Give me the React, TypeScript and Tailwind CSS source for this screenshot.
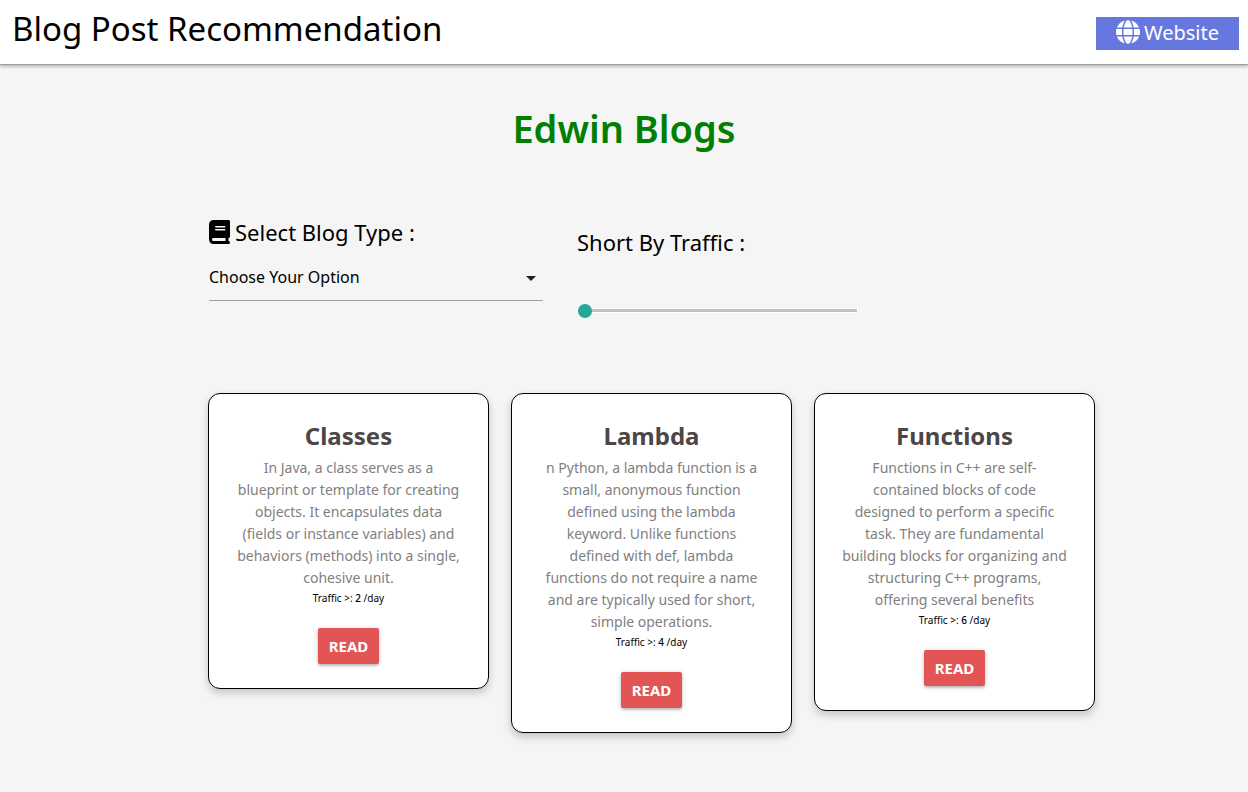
import { useState } from "react";
import { FaBook, FaGlobe } from "react-icons/fa6";

type Blog = { title: string; text: string; traffic: number };

const blogs: Blog[] = [
  {
    title: "Classes",
    text: "In Java, a class serves as a\nblueprint or template for creating\nobjects. It encapsulates data\n(fields or instance variables) and\nbehaviors (methods) into a single,\ncohesive unit.",
    traffic: 2,
  },
  {
    title: "Lambda",
    text: "n Python, a lambda function is a\nsmall, anonymous function\ndefined using the lambda\nkeyword. Unlike functions\ndefined with def, lambda\nfunctions do not require a name\nand are typically used for short,\nsimple operations.",
    traffic: 4,
  },
  {
    title: "Functions",
    text: "Functions in C++ are self-\ncontained blocks of code\ndesigned to perform a specific\ntask. They are fundamental\nbuilding blocks for organizing and\nstructuring C++ programs,\noffering several benefits",
    traffic: 6,
  },
];

function Header() {
  return (
    <header className="flex items-center justify-between border-b border-[#9e9e9e] bg-white pr-[9px] pl-3 shadow-[0_2px_2px_0_rgba(0,0,0,0.14),0_1px_5px_0_rgba(0,0,0,0.12)]">
      <a href="#home" className="pt-[5px] pb-[11px] text-[33px] leading-[48px] whitespace-nowrap">
        Blog Post Recommendation
      </a>
      <a
        href="#website"
        className="mt-[2px] flex h-[33px] items-center gap-1 bg-[#6777e0] px-5 text-xl leading-none whitespace-nowrap text-white"
      >
        <FaGlobe className="mb-[3px] size-6" aria-hidden="true" />
        Website
      </a>
    </header>
  );
}

function BlogCard({ title, text, traffic }: Blog) {
  return (
    <article className="flex flex-col items-center rounded-xl border border-black bg-white px-5 py-6 text-center shadow-[0_4px_8px_0_rgba(0,0,0,0.2)]">
      <h2 className="text-2xl leading-9 font-bold text-[#4d4646]">{title}</h2>
      <p className="pt-[3px] text-sm leading-[22px] whitespace-pre-line text-[#808080]">{text}</p>
      <p className="pt-px text-[10px] leading-4">
        Traffic &gt;: <span className="font-medium">{traffic}</span> /day
      </p>
      <button
        type="button"
        className="mt-[22px] h-9 rounded-xs bg-[#e35454] px-[11px] text-[15px] font-bold text-white shadow-[0_2px_2px_0_rgba(0,0,0,0.14),0_1px_5px_0_rgba(0,0,0,0.2)]"
      >
        READ
      </button>
    </article>
  );
}

export default function App() {
  const [traffic, setTraffic] = useState(0);

  return (
    <div className="min-h-screen bg-[#f5f5f5] font-['Noto_Sans',sans-serif] text-black">
      <Header />
      <main className="pb-12">
        <h1 className="pt-9 text-center text-[38px] leading-[54px] font-semibold text-[#008000]">
          Edwin Blogs
        </h1>
        <section className="flex gap-[34px] pt-[61px] pr-[153px] pl-[209px]">
          <div className="w-[334px]">
            <label htmlFor="blog-type" className="flex h-8 items-center gap-[5px] text-[22px] leading-8">
              <FaBook className="h-6 w-[21px]" aria-hidden="true" />
              Select Blog Type :
            </label>
            <div className="relative mt-[5px]">
              <select
                id="blog-type"
                className="block h-12 w-full appearance-none border-b border-[#9e9e9e] bg-transparent text-base outline-none"
              >
                <option>Choose Your Option</option>
                <option>Java</option>
                <option>Python</option>
                <option>C++</option>
              </select>
              <svg
                viewBox="0 0 24 24"
                className="pointer-events-none absolute top-[13px] right-0 size-6"
                aria-hidden="true"
              >
                <path d="M7 10l5 5 5-5z" fill="#212121" />
              </svg>
            </div>
          </div>
          <div className="w-[281px] pt-[10px]">
            <label htmlFor="traffic" className="block text-[22px] leading-8">
              Short By Traffic :
            </label>
            <input
              id="traffic"
              type="range"
              min={0}
              max={10}
              value={traffic}
              onChange={(e) => setTraffic(Number(e.target.value))}
              className="mt-[44px] block h-4 w-full cursor-pointer appearance-none bg-transparent [&::-webkit-slider-runnable-track]:h-[5px] [&::-webkit-slider-runnable-track]:border [&::-webkit-slider-runnable-track]:border-white [&::-webkit-slider-runnable-track]:bg-[#c2c0c2] [&::-webkit-slider-thumb]:-mt-[5px] [&::-webkit-slider-thumb]:size-[14px] [&::-webkit-slider-thumb]:appearance-none [&::-webkit-slider-thumb]:rounded-full [&::-webkit-slider-thumb]:bg-[#26a69a]"
            />
          </div>
        </section>
        <section className="grid grid-cols-3 items-start gap-[22px] pt-[75px] pr-[153px] pl-52">
          {blogs.map((blog) => (
            <BlogCard key={blog.title} {...blog} />
          ))}
        </section>
      </main>
    </div>
  );
}
